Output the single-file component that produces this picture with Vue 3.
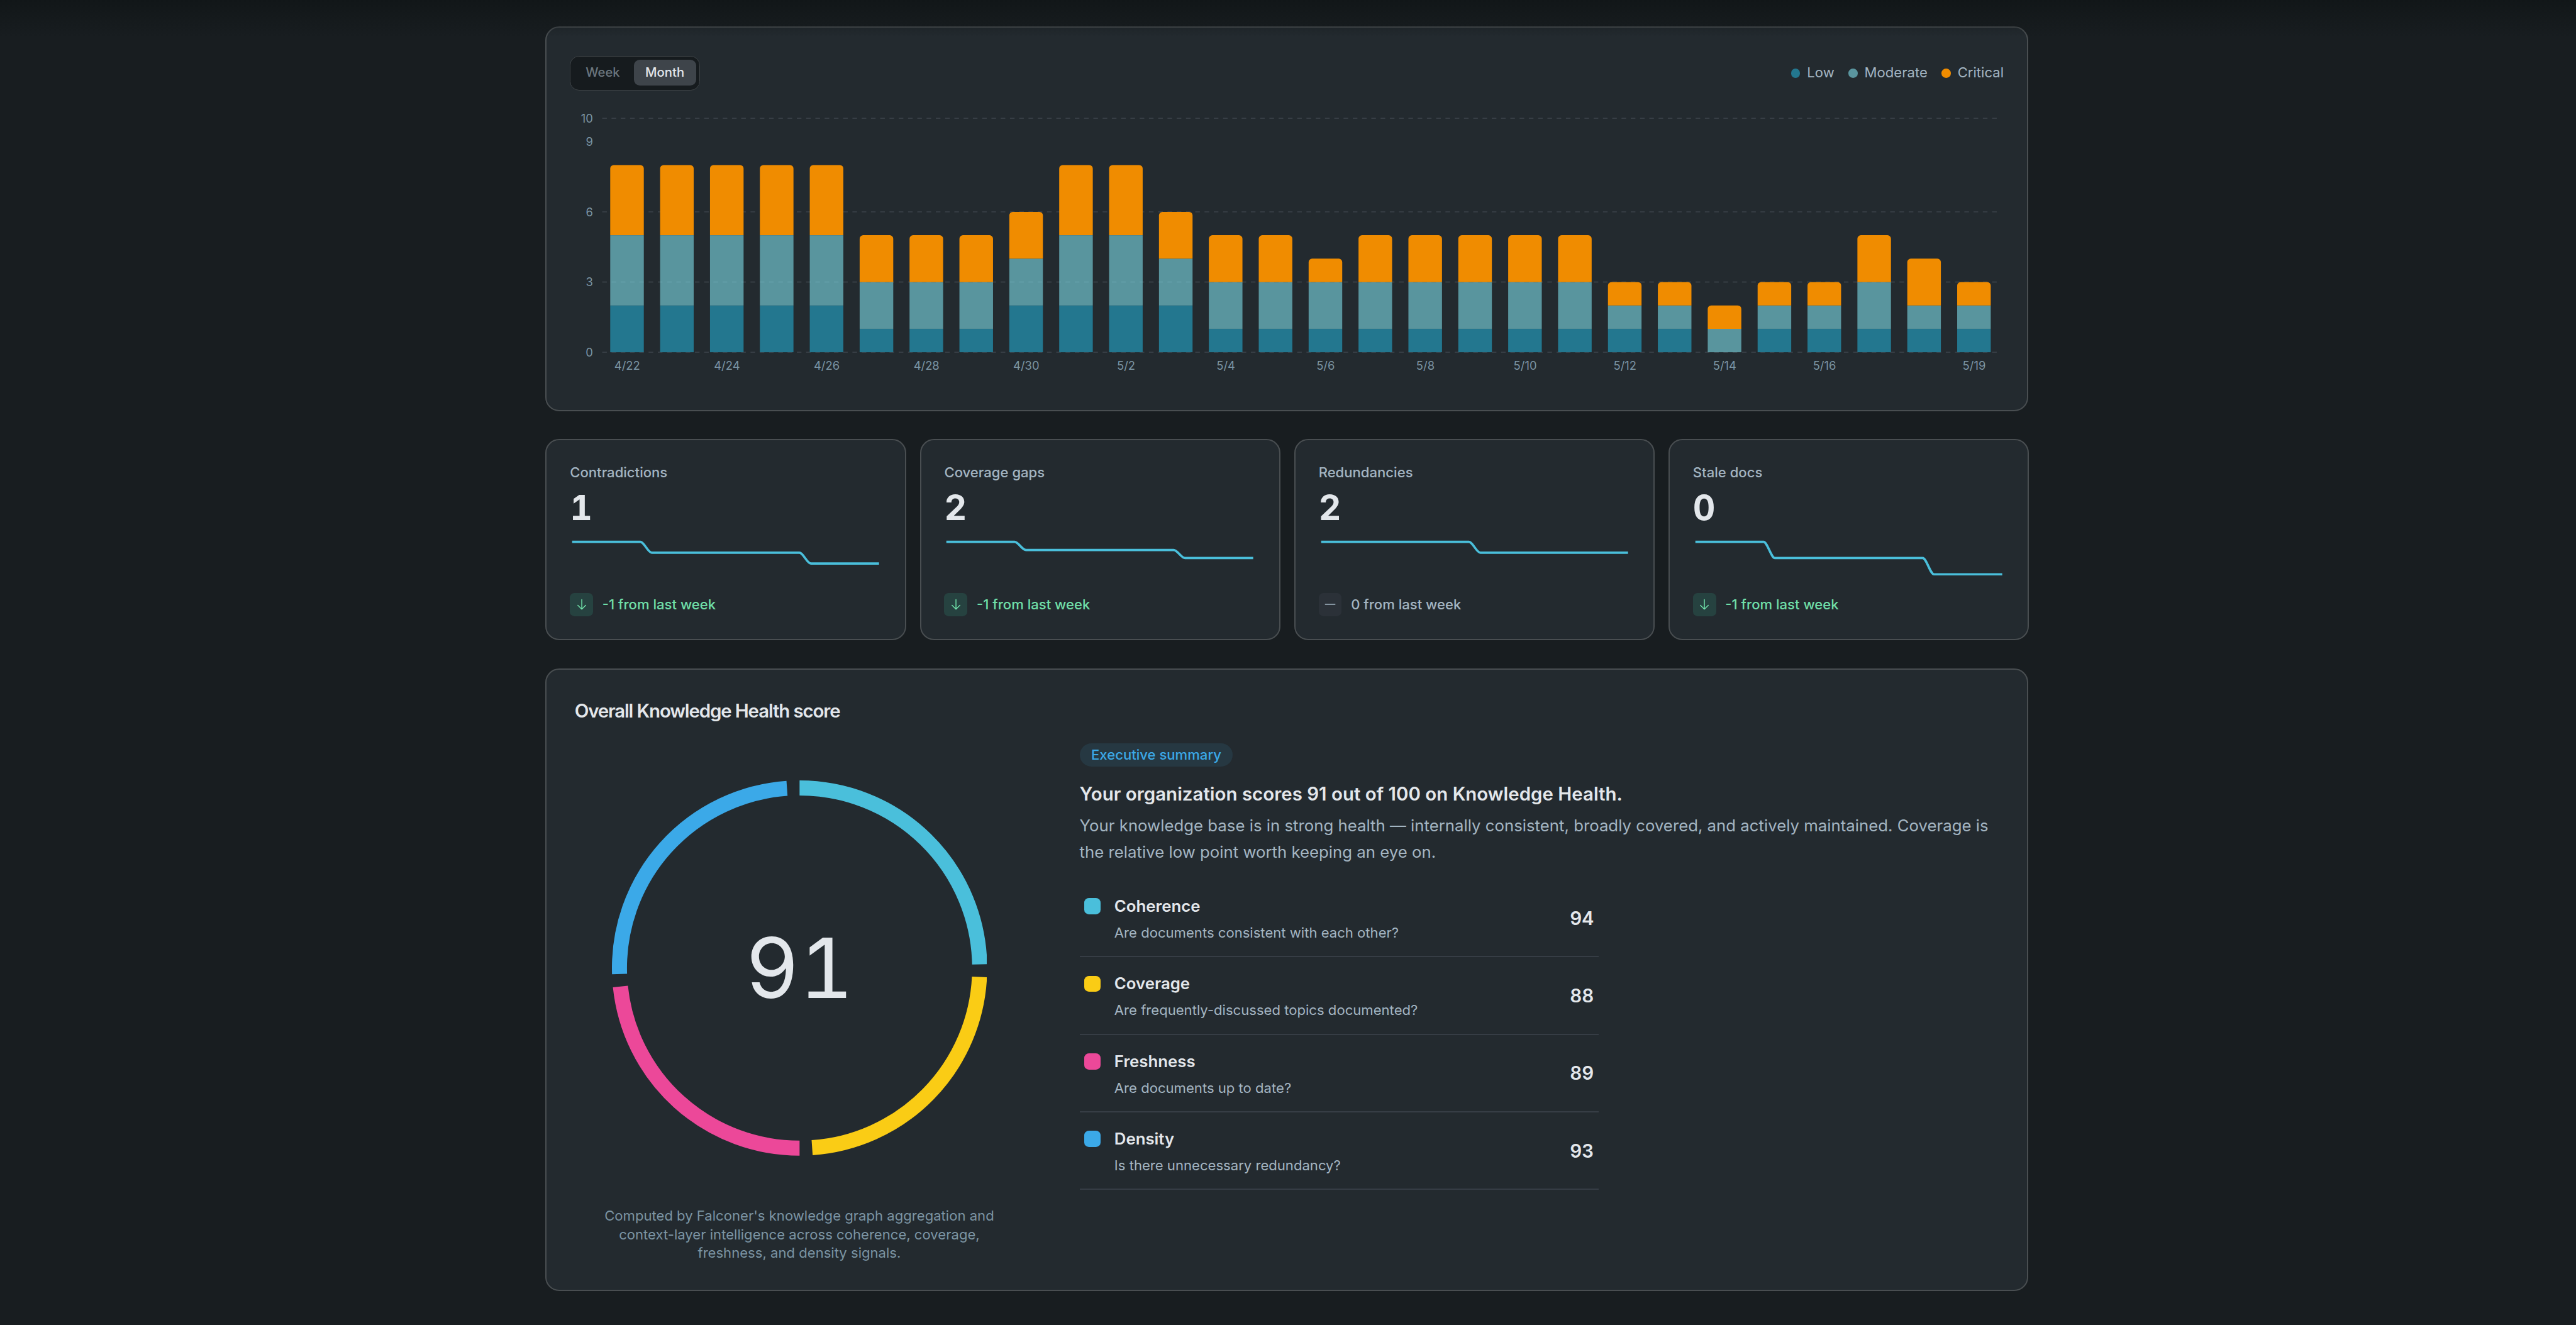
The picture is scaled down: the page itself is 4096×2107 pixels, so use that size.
<template>
  <div class="page">
    <div class="top-fade"></div>
    <main class="content">
      <section class="card chart-card">
        <header class="chart-header">
          <div class="toggle">
            <button
              v-for="r in ranges"
              :key="r"
              class="toggle-btn"
              :class="{ active: r === range }"
              @click="range = r"
            >{{ r }}</button>
          </div>
          <ul class="legend">
            <li v-for="s in series" :key="s.key" class="legend-item">
              <span class="dot" :class="'dot-' + s.key"></span>
              <span>{{ s.label }}</span>
            </li>
          </ul>
        </header>

        <svg class="chart" width="1238" height="240" viewBox="0 0 1238 240">
          <g class="grid">
            <line v-for="t in gridTicks" :key="t" :x1="PLOT_X" :x2="PLOT_X + PLOT_W" :y1="yPos(t)" :y2="yPos(t)" />
          </g>
          <g v-for="(b, i) in bars" :key="i">
            <rect class="bar-low" :x="b.x" :y="b.lowY" :width="BAR_W" :height="b.lowH" />
            <rect class="bar-moderate" :x="b.x" :y="b.modY" :width="BAR_W" :height="b.modH" />
            <path class="bar-critical" :d="b.critical" />
          </g>
          <g class="axis">
            <text v-for="t in yTicks" :key="'y' + t" x="20" :y="yPos(t) + 3.6" text-anchor="end">{{ t }}</text>
            <text v-for="l in xLabels" :key="l.text" :x="l.x" y="228.9" text-anchor="middle">{{ l.text }}</text>
          </g>
        </svg>
      </section>

      <section class="stats">
        <article v-for="s in stats" :key="s.label" class="card stat">
          <span class="stat-label">{{ s.label }}</span>
          <span class="stat-value">{{ s.value }}</span>
          <svg class="spark" width="269" height="32" viewBox="0 0 269 32">
            <path :d="sparkPath(s.trend)" />
          </svg>
          <div class="delta" :class="{ good: s.delta < 0 }">
            <span class="delta-badge">
              <svg width="12" height="12" viewBox="0 0 12 12">
                <path v-if="s.delta < 0" d="M6 1.9V10.2M2.6 6.8L6 10.2L9.4 6.8" />
                <path v-else d="M1.8 6H10.2" />
              </svg>
            </span>
            <span>{{ s.delta }} from last week</span>
          </div>
        </article>
      </section>

      <section class="card score-card">
        <h2 class="score-title">Overall Knowledge Health score</h2>
        <div class="score-body">
          <div class="gauge">
            <div class="ring">
              <svg width="324" height="324" viewBox="-162 -162 324 324">
                <path v-for="a in arcs" :key="a.color" :d="a.d" :stroke="a.color" />
              </svg>
              <span class="ring-value">91</span>
            </div>
            <p class="caption">
              Computed by Falconer's knowledge graph aggregation and<br />
              context-layer intelligence across coherence, coverage,<br />
              freshness, and density signals.
            </p>
          </div>

          <div class="summary">
            <span class="pill">Executive summary</span>
            <h3 class="headline">Your organization scores 91 out of 100 on Knowledge Health.</h3>
            <p class="summary-text">
              Your knowledge base is in strong health — internally consistent, broadly covered, and actively maintained. Coverage is<br />
              the relative low point worth keeping an eye on.
            </p>
            <ul class="metrics">
              <li v-for="m in metrics" :key="m.name" class="metric">
                <span class="swatch" :style="{ background: m.color }"></span>
                <div class="metric-text">
                  <span class="metric-name">{{ m.name }}</span>
                  <span class="metric-desc">{{ m.desc }}</span>
                </div>
                <span class="metric-score">{{ m.score }}</span>
              </li>
            </ul>
          </div>
        </div>
      </section>
    </main>
  </div>
</template>

<script setup>
import { computed, ref } from 'vue';

const ranges = ['Week', 'Month'];
const range = ref('Month');

const series = [
  { key: 'low', label: 'Low' },
  { key: 'moderate', label: 'Moderate' },
  { key: 'critical', label: 'Critical' },
];

// [low, moderate, critical] per day, 4/22 - 5/19
const days = [
  [2, 3, 3], [2, 3, 3], [2, 3, 3], [2, 3, 3], [2, 3, 3],
  [1, 2, 2], [1, 2, 2], [1, 2, 2],
  [2, 2, 2], [2, 3, 3], [2, 3, 3], [2, 2, 2],
  [1, 2, 2], [1, 2, 2], [1, 2, 1], [1, 2, 2], [1, 2, 2],
  [1, 2, 2], [1, 2, 2], [1, 2, 2],
  [1, 1, 1], [1, 1, 1], [0, 1, 1], [1, 1, 1], [1, 1, 1],
  [1, 2, 2], [1, 1, 2], [1, 1, 1],
];

const PLOT_X = 28;
const PLOT_W = 1206;
const PLOT_TOP = 12;
const PLOT_H = 202;
const BAR_W = 29;
const band = PLOT_W / days.length;

const yTicks = [0, 3, 6, 9, 10];
const gridTicks = [0, 3, 6, 10];
const yPos = (v) => PLOT_TOP + PLOT_H * (1 - v / 10);

const bars = computed(() =>
  days.map(([low, mod, crit], i) => {
    const x = PLOT_X + band * i + band * 0.16;
    const top = yPos(low + mod + crit);
    const bottom = yPos(low + mod);
    const r = 3;
    return {
      x,
      lowY: yPos(low),
      lowH: yPos(0) - yPos(low),
      modY: bottom,
      modH: yPos(low) - bottom,
      critical: `M${x} ${bottom}V${top + r}a${r} ${r} 0 0 1 ${r} ${-r}H${x + BAR_W - r}a${r} ${r} 0 0 1 ${r} ${r}V${bottom}Z`,
    };
  })
);

const labelled = {
  0: '4/22', 2: '4/24', 4: '4/26', 6: '4/28', 8: '4/30', 10: '5/2', 12: '5/4',
  14: '5/6', 16: '5/8', 18: '5/10', 20: '5/12', 22: '5/14', 24: '5/16', 27: '5/19',
};
const xLabels = Object.entries(labelled).map(([i, text]) => ({
  text,
  x: PLOT_X + band * (Number(i) + 0.5),
}));

// trend: value ranges as [first index, value], 28 points in total
const stats = [
  { label: 'Contradictions', value: 1, delta: -1, trend: [[0, 3], [7, 2], [21, 1]] },
  { label: 'Coverage gaps', value: 2, delta: -1, trend: [[0, 4], [7, 3], [21, 2]] },
  { label: 'Redundancies', value: 2, delta: 0, trend: [[0, 3], [14, 2]] },
  { label: 'Stale docs', value: 0, delta: -1, trend: [[0, 2], [7, 1], [21, 0]] },
];

function sparkPath(trend) {
  const step = 265 / 27;
  const max = trend[0][1];
  const y = (v) => 2 + 28 * (1 - v / max);
  let d = `M2 ${y(max)}`;
  for (let i = 1; i < trend.length; i++) {
    const [idx, value] = trend[i];
    const x1 = 2 + step * idx;
    const x0 = x1 - step;
    const y0 = y(trend[i - 1][1]);
    const y1 = y(value);
    d += `H${x0}C${x0 + step / 3} ${y0} ${x1 - step / 3} ${y1} ${x1} ${y1}`;
  }
  return d + 'H267';
}

const metrics = [
  { name: 'Coherence', desc: 'Are documents consistent with each other?', score: 94, color: '#4abfdb' },
  { name: 'Coverage', desc: 'Are frequently-discussed topics documented?', score: 88, color: '#facc15' },
  { name: 'Freshness', desc: 'Are documents up to date?', score: 89, color: '#ec4899' },
  { name: 'Density', desc: 'Is there unnecessary redundancy?', score: 93, color: '#3ba9e8' },
];

const arcs = computed(() => {
  const gap = 4;
  const radius = 155.5;
  const total = metrics.reduce((sum, m) => sum + m.score, 0);
  const point = (deg) => {
    const a = (deg * Math.PI) / 180;
    return `${(radius * Math.sin(a)).toFixed(3)} ${(-radius * Math.cos(a)).toFixed(3)}`;
  };
  let start = 0;
  return metrics.map((m) => {
    const sweep = ((360 - gap * metrics.length) * m.score) / total;
    const d = `M${point(start)}A${radius} ${radius} 0 0 1 ${point(start + sweep)}`;
    start += sweep + gap;
    return { color: m.color, d };
  });
});
</script>

<style>
body {
  background: #181d20;
  overflow: hidden;
}
</style>

<style scoped>
.page {
  zoom: 1.841727;
  position: relative;
  box-sizing: border-box;
  width: 2224px;
  height: 1144px;
  padding: 23px 2px 0 0;
  overflow: hidden;
  background: #181d20;
  color: #e3e7eb;
  font-family: Inter, sans-serif;
  font-size: 12px;
}

.top-fade {
  position: absolute;
  inset: 0 0 auto;
  height: 32px;
  background: linear-gradient(rgba(17, 22, 24, 0.95), rgba(17, 22, 24, 0));
  z-index: 1;
}

.content {
  width: 1280px;
  margin: 0 auto;
  display: flex;
  flex-direction: column;
  gap: 24px;
}

.card {
  box-sizing: border-box;
  background: #232a2f;
  border: 1.09px solid #494e51;
  border-radius: 12px;
}

ul, h2, h3, p {
  margin: 0;
  padding: 0;
  list-style: none;
}

/* chart */
.chart-card {
  height: 332px;
  padding: 24px 20px 0;
}
.chart-header {
  display: flex;
  justify-content: space-between;
  align-items: center;
  height: 30px;
}
.toggle {
  display: flex;
  gap: 2px;
  box-sizing: border-box;
  height: 30px;
  padding: 3px;
  background: #161b1e;
  border: 1px solid #3f4447;
  border-radius: 8px;
}
.toggle-btn {
  padding: 0 10px;
  height: 22px;
  border: 0;
  border-radius: 5px;
  background: transparent;
  color: #6b767e;
  font: 500 11px/22px Inter, sans-serif;
}
.toggle-btn.active {
  background: #3e444a;
  color: #e3e7eb;
}
.legend {
  display: flex;
  gap: 12px;
  color: #a3b5c2;
}
.legend-item {
  display: flex;
  align-items: center;
  gap: 6px;
  line-height: 16px;
}
.dot {
  width: 8px;
  height: 8px;
  border-radius: 50%;
}
.dot-low { background: #23778f; }
.dot-moderate { background: #5a959f; }
.dot-critical { background: #f08c00; }

.chart {
  display: block;
  margin-top: 12px;
}
.grid line {
  stroke: #373e45;
  stroke-width: 1;
  stroke-dasharray: 4 4;
}
.bar-low { fill: #23778f; }
.bar-moderate { fill: rgba(135, 236, 250, 0.55); }
.bar-critical { fill: #f08c00; }
.axis text {
  fill: #7b94a3;
  font-size: 10px;
}

/* stat cards */
.stats {
  display: grid;
  grid-template-columns: repeat(4, 1fr);
  gap: 12px;
}
.stat {
  display: flex;
  flex-direction: column;
  height: 174px;
  padding: 20px 20px 0;
}
.stat-label {
  line-height: 16px;
  font-weight: 500;
  color: #a3b5c2;
}
.stat-value {
  margin-top: 4px;
  font-size: 30px;
  line-height: 36px;
  font-weight: 700;
  font-variant-numeric: tabular-nums;
}
.spark {
  display: block;
  margin-top: 10px;
}
.spark path {
  fill: none;
  stroke: #4abfdb;
  stroke-width: 2;
  stroke-linejoin: round;
}
.delta {
  display: flex;
  align-items: center;
  gap: 8px;
  margin-top: 14px;
  color: #a3b5c2;
  font-weight: 500;
}
.delta-badge {
  display: flex;
  align-items: center;
  justify-content: center;
  width: 20px;
  height: 20px;
  border-radius: 4px;
  background: #2b3138;
}
.delta-badge path {
  fill: none;
  stroke: currentColor;
  stroke-width: 0.8;
  stroke-linecap: round;
  stroke-linejoin: round;
}
.delta.good { color: #6fdfa8; }
.delta.good .delta-badge { background: #264240; }

/* score */
.score-card {
  height: 538px;
  padding: 24px;
}
.score-title {
  font-size: 16px;
  line-height: 23.5px;
  font-weight: 600;
  letter-spacing: -0.62px;
}
.score-body {
  display: flex;
  gap: 48px;
  margin-top: 16.5px;
}
.gauge {
  width: 388px;
  flex-shrink: 0;
  display: flex;
  flex-direction: column;
  align-items: center;
}
.ring {
  display: grid;
  place-items: center;
  margin-top: 32px;
}
.ring > * { grid-area: 1 / 1; }
.ring path {
  fill: none;
  stroke-width: 13;
}
.ring-value {
  font-size: 72px;
  line-height: 72px;
  font-variant-numeric: tabular-nums;
}
.caption {
  margin-top: 44px;
  line-height: 16px;
  text-align: center;
  white-space: nowrap;
  color: #7b94a3;
}
.summary { flex: 1; }
.pill {
  display: block;
  width: fit-content;
  padding: 0 10px;
  border-radius: 10px;
  background: #263842;
  color: #3ba9e8;
  line-height: 20px;
  font-weight: 500;
}
.headline {
  margin-top: 11px;
  font-size: 16px;
  line-height: 24px;
  font-weight: 600;
}
.summary-text {
  margin-top: 4.5px;
  font-size: 14px;
  line-height: 23px;
  white-space: nowrap;
  color: #a3b5c2;
}
.metrics {
  width: 448px;
  margin-top: 12px;
}
.metric {
  display: flex;
  align-items: center;
  box-sizing: border-box;
  height: 67px;
  padding: 0 4px;
  border-bottom: 1.09px solid #363d45;
}
.swatch {
  align-self: flex-start;
  width: 14px;
  height: 14px;
  margin: 16px 12px 0 0;
  border-radius: 4px;
}
.metric-text {
  display: flex;
  flex: 1;
  flex-direction: column;
  gap: 4px;
  padding-top: 1px;
}
.metric-name {
  font-size: 14px;
  line-height: 21px;
  font-weight: 600;
}
.metric-desc {
  line-height: 17px;
  color: #a3b5c2;
}
.metric-score {
  font-size: 16px;
  font-weight: 600;
  font-variant-numeric: tabular-nums;
}
</style>
